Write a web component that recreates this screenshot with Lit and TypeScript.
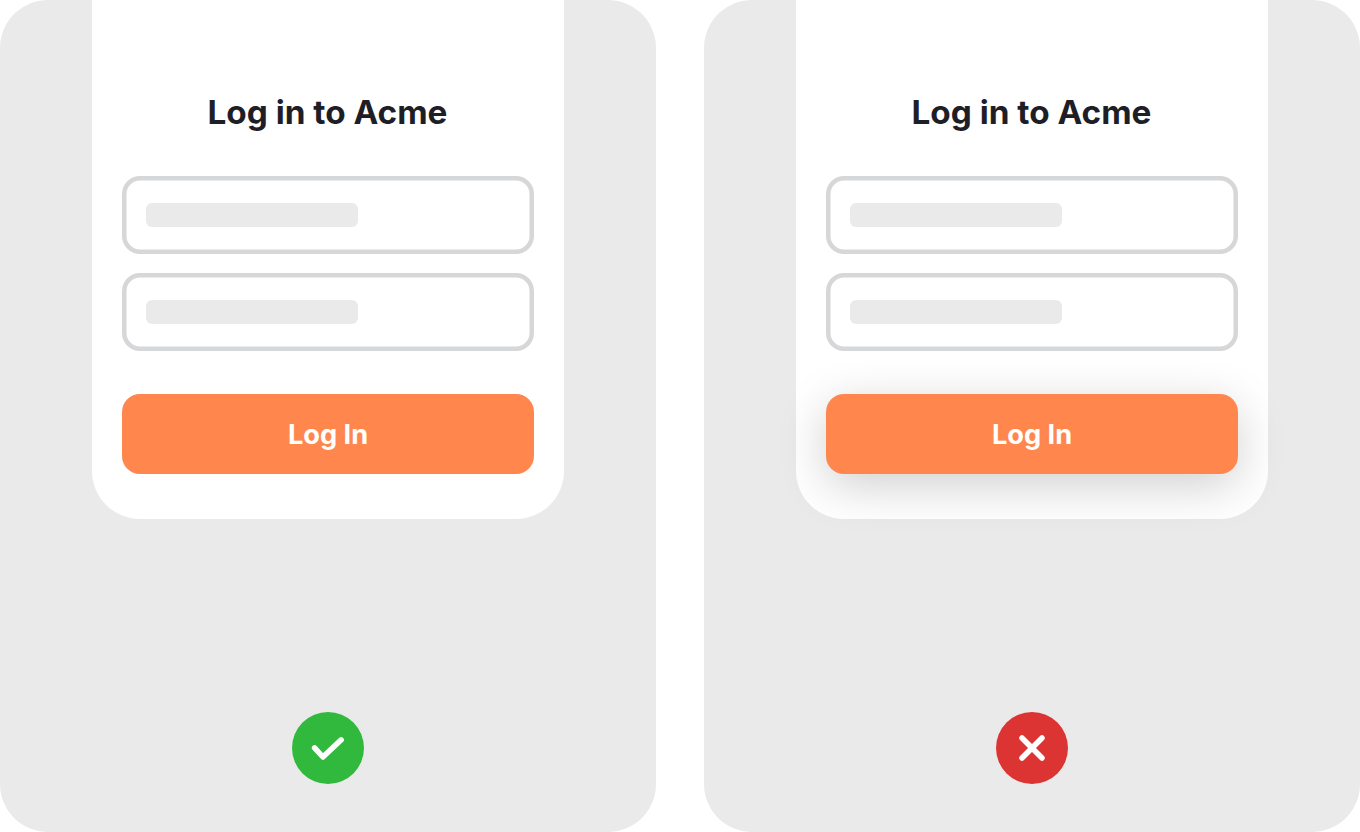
import { LitElement, html, css, svg } from 'lit';

class LoginCard extends LitElement {
  static properties = {
    raised: { type: Boolean },
  };

  declare raised: boolean;

  constructor() {
    super();
    this.raised = false;
  }

  static styles = css`
    :host {
      display: block;
    }
    .card {
      box-sizing: border-box;
      width: 472px;
      height: 519px;
      padding: 92px 30px 0;
      background: #fff;
      border-radius: 0 0 48px 48px;
    }
    h1 {
      margin: 0 0 43px;
      padding-right: 1px;
      color: #1e1e27;
      font-size: 33.3px;
      font-weight: 700;
      line-height: 41px;
      text-align: center;
      white-space: nowrap;
    }
    .fields {
      display: grid;
      gap: 19px;
      margin-bottom: 43px;
    }
    .field {
      display: flex;
      align-items: center;
      box-sizing: border-box;
      height: 78px;
      padding-left: 24px;
      border-radius: 18px;
      box-shadow: inset 0 0 0 4.5px #d6d7d9;
    }
    .placeholder {
      width: 212px;
      height: 24px;
      border-radius: 6px;
      background: #eaeaea;
    }
    button {
      display: block;
      width: 100%;
      height: 80px;
      padding: 1px 0 0;
      border: 0;
      border-radius: 18px;
      background: #ff874e;
      color: #fff;
      font-family: inherit;
      font-size: 27.2px;
      font-weight: 700;
      line-height: 80px;
    }
    button.raised {
      box-shadow: 0 12px 48px rgba(0, 0, 0, 0.19);
    }
  `;

  render() {
    return html`
      <div class="card">
        <h1>Log in to Acme</h1>
        <div class="fields">
          <div class="field"><div class="placeholder"></div></div>
          <div class="field"><div class="placeholder"></div></div>
        </div>
        <button class="${this.raised ? 'raised' : ''}">Log In</button>
      </div>
    `;
  }
}

customElements.define('login-card', LoginCard);

const icons = {
  good: svg`<path d="M22.6 35.9L30.9 45L49.2 27.8" />`,
  bad: svg`<path d="M26 26L46 46M46 26L26 46" />`,
};

class ExamplePanel extends LitElement {
  static properties = {
    verdict: { type: String },
  };

  declare verdict: 'good' | 'bad';

  constructor() {
    super();
    this.verdict = 'good';
  }

  static styles = css`
    :host {
      display: block;
    }
    .panel {
      display: flex;
      flex-direction: column;
      align-items: center;
      justify-content: space-between;
      box-sizing: border-box;
      height: 832px;
      padding-bottom: 48px;
      border-radius: 48px;
      background: #eaeaea;
    }
    .verdict {
      display: block;
      width: 72px;
      height: 72px;
      border-radius: 50%;
      fill: none;
      stroke: #fff;
      stroke-width: 5.5;
      stroke-linecap: round;
      stroke-linejoin: round;
    }
    .verdict.good {
      background: #31b93d;
    }
    .verdict.bad {
      background: #dc3433;
    }
  `;

  render() {
    return html`
      <div class="panel">
        <login-card ?raised="${this.verdict === 'bad'}"></login-card>
        <svg class="verdict ${this.verdict}" viewBox="0 0 72 72">${icons[this.verdict]}</svg>
      </div>
    `;
  }
}

customElements.define('example-panel', ExamplePanel);

class AppRoot extends LitElement {
  static styles = css`
    :host {
      display: grid;
      grid-template-columns: 1fr 1fr;
      gap: 48px;
      width: 1360px;
      height: 832px;
      background: #fff;
      font-family: Inter, 'Liberation Sans', sans-serif;
    }
  `;

  render() {
    return html`
      <example-panel verdict="good"></example-panel>
      <example-panel verdict="bad"></example-panel>
    `;
  }
}

customElements.define('app-root', AppRoot);

declare global {
  interface HTMLElementTagNameMap {
    'login-card': LoginCard;
    'example-panel': ExamplePanel;
    'app-root': AppRoot;
  }
}
